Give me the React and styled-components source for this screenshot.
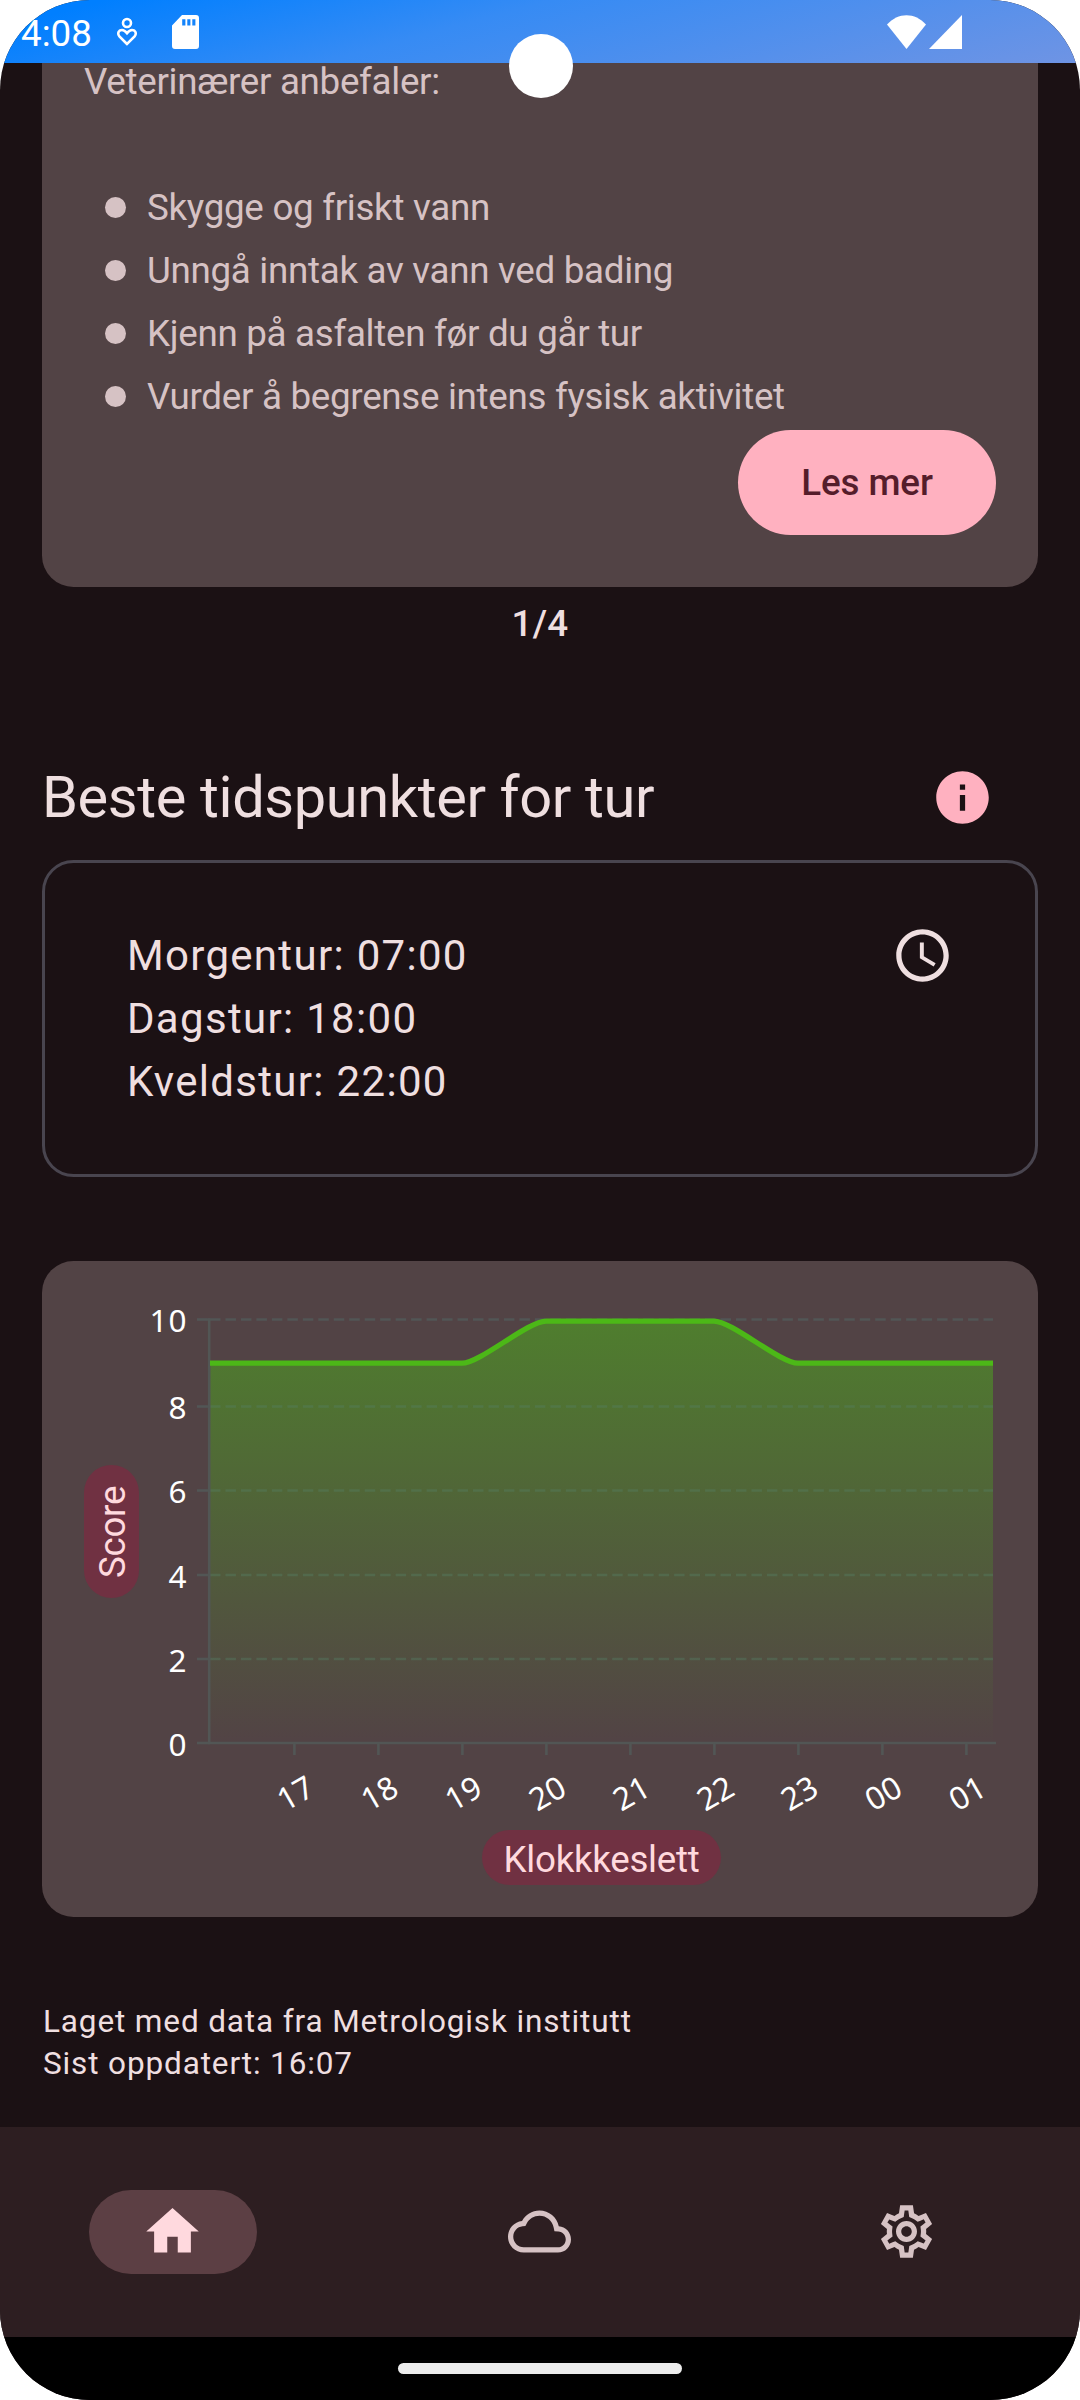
import React from "react";
import styled, { createGlobalStyle } from "styled-components";

const c = {
  bg: "#1b1114", surface: "#524345", onSurface: "#efdfe0", muted: "#d6c2c4",
  primary: "#ffb1c0", onPrimary: "#551d2b", pill: "#703142", onPill: "#ffd9de",
  nav: "#2d1e21", navActive: "#5c3f44", outline: "#49454f", line: "#4cb817", axis: "#525655",
};

const Global = createGlobalStyle`
  html, body { margin: 0; background: #fff; }
  *, *::before, *::after { box-sizing: border-box; }
  body { font-family: Roboto, "Noto Sans", sans-serif; -webkit-font-smoothing: antialiased; }
  h2, p, ul { margin: 0; padding: 0; }
`;

const Screen = styled.div`
  position: relative;
  display: flex;
  flex-direction: column;
  width: 1080px;
  height: 2400px;
  overflow: hidden;
  background: ${c.bg};
  border-radius: 90px;
`;

const StatusBar = styled.header`
  flex: none;
  display: flex;
  align-items: center;
  justify-content: space-between;
  height: 63px;
  padding: 0 118px 0 21px;
  color: #fff;
  background: linear-gradient(165deg, #007fff 8%, #368bf4 42%, #6f94e4 100%);
`;
const StatusGroup = styled.div`
  display: flex;
  align-items: center;
`;
const Time = styled.span`
  width: 71px;
  font-size: 36.75px;
  line-height: 63px;
  padding-top: 3px;
`;
const StatusIcon = styled.svg`
  display: block;
  flex: none;
  margin-left: ${(p) => p.$gap || 0}px;
  fill: currentColor;
`;
const Camera = styled.div`
  position: absolute;
  left: 508.5px;
  top: 33.5px;
  width: 64px;
  height: 64px;
  border-radius: 50%;
  background: #fff;
`;

const Content = styled.main`
  flex: 1;
  min-height: 0;
  display: flex;
  flex-direction: column;
  padding: 0 42px;
  color: ${c.onSurface};
`;

const AdviceCard = styled.section`
  flex: none;
  display: flex;
  flex-direction: column;
  height: 524px;
  padding: 0 42px;
  background: ${c.surface};
  border-radius: 0 0 31.5px 31.5px;
  color: ${c.muted};
  font-size: 36.75px;
  letter-spacing: -0.3px;
`;
const AdviceTitle = styled.p`
  height: 113px;
  line-height: 37px;
`;
const AdviceList = styled.ul`
  list-style: none;
  padding-left: 21px;
`;
const AdviceItem = styled.li`
  display: flex;
  align-items: center;
  gap: 21px;
  height: 63px;
  line-height: 63px;
  &::before {
    content: "";
    width: 21px;
    height: 21px;
    border-radius: 50%;
    background: currentColor;
  }
`;
const Button = styled.button`
  align-self: flex-end;
  margin-top: 2px;
  width: 258px;
  height: 105px;
  padding: 0;
  border: 0;
  border-radius: 53px;
  background: ${c.primary};
  color: ${c.onPrimary};
  font: 500 36.75px Roboto, sans-serif;
  letter-spacing: -0.1px;
`;
const Pager = styled.p`
  height: 73px;
  line-height: 73px;
  text-align: center;
  font-size: 36.75px;
  font-weight: 500;
  letter-spacing: 0.3px;
`;

const SectionHead = styled.div`
  display: flex;
  align-items: center;
  justify-content: space-between;
  height: 126px;
  margin-top: 74px;
  padding-right: 44px;
`;
const Title = styled.h2`
  font-size: 57.75px;
  font-weight: 400;
  line-height: 74px;
  letter-spacing: -0.38px;
`;
const Icon = styled.svg`
  display: block;
  flex: none;
  width: 63px;
  height: 63px;
  fill: ${(p) => p.$color};
`;

const TimesCard = styled.section`
  flex: none;
  display: flex;
  justify-content: space-between;
  height: 317px;
  padding: 61px 81px 58px 82px;
  border: 3px solid ${c.outline};
  border-radius: 31.5px;
`;
const TimeRow = styled.p`
  font-size: 42px;
  line-height: 63px;
  letter-spacing: 1.31px;
`;

const ChartCard = styled.section`
  flex: none;
  display: grid;
  grid-template-columns: 55px 1fr;
  grid-template-rows: 569px 55px;
  height: 656px;
  margin-top: 84px;
  padding-left: 42px;
  background: ${c.surface};
  border-radius: 31.5px;
`;
const AxisPill = styled.span`
  display: flex;
  align-items: center;
  justify-content: center;
  border-radius: 28px;
  background: ${c.pill};
  color: ${c.onPill};
  font-size: 36.75px;
  letter-spacing: -0.3px;
`;
const YPill = styled(AxisPill)`
  align-self: start;
  width: 55px;
  height: 133px;
  margin-top: 204px;
  padding-right: 2px;
  writing-mode: vertical-rl;
  transform: rotate(180deg);
`;
const XPill = styled(AxisPill)`
  grid-column: 2;
  width: 239px;
  height: 55px;
  margin-left: 343px;
  padding-top: 3px;
`;
const Plot = styled.svg`
  display: block;
  width: 899px;
  height: 569px;
`;
const Tick = styled.text`
  fill: #fff;
  font-family: "Noto Sans", sans-serif;
  font-size: 31.5px;
`;
const ScoreTick = styled(Tick)`
  letter-spacing: 1px;
`;

const Footer = styled.p`
  margin-top: 84px;
  padding-left: 1px;
  font-size: 31.5px;
  line-height: 42px;
  letter-spacing: 0.87px;
`;

const NavBar = styled.nav`
  flex: none;
  display: grid;
  grid-template-columns: 345px 1fr 347px;
  align-items: center;
  justify-items: center;
  height: 210px;
  background: ${c.nav};
`;
const NavItem = styled.div`
  display: flex;
  align-items: center;
  justify-content: center;
  width: 168px;
  height: 84px;
  padding-bottom: 1px;
  border-radius: 42px;
  background: ${(p) => (p.$active ? c.navActive : "transparent")};
`;
const GestureArea = styled.div`
  flex: none;
  display: flex;
  justify-content: center;
  height: 63px;
  padding-top: 26px;
  background: #000;
`;
const GestureBar = styled.div`
  width: 284px;
  height: 11px;
  border-radius: 6px;
  background: #ececec;
`;

const tips = [
  "Skygge og friskt vann",
  "Unngå inntak av vann ved bading",
  "Kjenn på asfalten før du går tur",
  "Vurder å begrense intens fysisk aktivitet",
];
const times = ["Morgentur: 07:00", "Dagstur: 18:00", "Kveldstur: 22:00"];
const hours = ["17", "18", "19", "20", "21", "22", "23", "00", "01"];
const levels = [[10, 1319.5], [8, 1406.5], [6, 1490.5], [4, 1575], [2, 1659], [0, 1743]];
const curve = "M210 1363.2H462C480 1363.2 528 1321 546 1321H714C732 1321 780 1363.2 798 1363.2H993";

function ScoreChart() {
  return (
    <Plot viewBox="139 1261 899 569">
      <defs>
        <linearGradient id="area" x1="0" x2="0" y1="1321" y2="1743" gradientUnits="userSpaceOnUse">
          <stop offset="0" stopColor={c.line} stopOpacity="0.5" />
          <stop offset="1" stopColor={c.line} stopOpacity="0" />
        </linearGradient>
      </defs>
      <path d={`${curve}V1743H210Z`} fill="url(#area)" />
      {levels.map(([v, y]) => (
        <g key={v}>
          <path d={`M197 ${y}H210`} stroke={c.axis} strokeWidth="2.6" />
          {v > 0 && (
            <path
              d={`M210 ${y}H993`}
              stroke={v === 10 ? c.axis : "#548064"}
              strokeOpacity={v === 10 ? 1 : 0.4}
              strokeWidth="2.6"
              strokeDasharray="10.5 4.97"
            />
          )}
          <ScoreTick x="187.500" y={y + 12.5} textAnchor="end">{v}</ScoreTick>
        </g>
      ))}
      <path d="M209.200 1318.500V1744.300M208 1743H996" stroke={c.axis} strokeWidth="2.6" fill="none" />
      <path d={curve} fill="none" stroke={c.line} strokeWidth="5.25" />
      {hours.map((h, i) => {
        const x = 294.4 + i * 84;
        return (
          <g key={h}>
            <path d={`M${x} 1743V1755`} stroke={c.axis} strokeWidth="2.6" />
            <Tick textAnchor="middle" transform={`translate(${x + 6.5} 1803) rotate(-30)`}>{h}</Tick>
          </g>
        );
      })}
    </Plot>
  );
}

export default function App() {
  return (
    <>
      <Global />
      <Screen>
        <StatusBar>
          <StatusGroup>
            <Time>4:08</Time>
            <StatusIcon $gap={24} width="22" height="30" viewBox="0 0 22 30">
              <circle cx="11" cy="6" r="4" fill="none" stroke="currentColor" strokeWidth="2.6" />
              <path d="M11 27 3.400 19.400C1.600 17.300 2 14.800 3.600 13.700 6 12.300 8.500 13 11 16.200 13.500 13 16 12.300 18.400 13.700 20 14.800 20.400 17.300 18.600 19.400Z" fill="none" stroke="currentColor" strokeWidth="2.6" />
            </StatusIcon>
            <StatusIcon $gap={34} width="27" height="34" viewBox="0 0 27 34">
              <path fillRule="evenodd" d="M10 0H24a3 3 0 0 1 3 3V31a3 3 0 0 1-3 3H3a3 3 0 0 1-3-3V10.500ZM10.200 4.200V10.500H13.400V4.200ZM15.300 4.200V10.500H18.400V4.200ZM20.300 4.200V10.500H23.400V4.200Z" />
            </StatusIcon>
          </StatusGroup>
          <StatusGroup>
            <StatusIcon width="39" height="34" viewBox="0 0 39 34">
              <path d="M0 9.500C11-3 28-3 39 9.500L19.500 34Z" />
            </StatusIcon>
            <StatusIcon $gap={3} width="33" height="34" viewBox="0 0 33 34">
              <path d="M33 0V34H0Z" />
            </StatusIcon>
          </StatusGroup>
        </StatusBar>

        <Content>
          <AdviceCard>
            <AdviceTitle>Veterinærer anbefaler:</AdviceTitle>
            <AdviceList>
              {tips.map((t) => <AdviceItem key={t}>{t}</AdviceItem>)}
            </AdviceList>
            <Button>Les mer</Button>
          </AdviceCard>
          <Pager>1/4</Pager>

          <SectionHead>
            <Title>Beste tidspunkter for tur</Title>
            <Icon $color={c.primary} viewBox="0 0 24 24">
              <path d="M12 2C6.480 2 2 6.480 2 12s4.480 10 10 10 10-4.480 10-10S17.520 2 12 2zm1 15h-2v-6h2v6zm0-8h-2V7h2v2z" />
            </Icon>
          </SectionHead>
          <TimesCard>
            <div>
              {times.map((t) => <TimeRow key={t}>{t}</TimeRow>)}
            </div>
            <Icon $color={c.onSurface} viewBox="0 0 24 24">
              <path d="M11.990 2C6.470 2 2 6.480 2 12s4.470 10 9.990 10C17.520 22 22 17.520 22 12S17.520 2 11.990 2zM12 20c-4.420 0-8-3.580-8-8s3.580-8 8-8 8 3.580 8 8-3.580 8-8 8zm.5-13H11v6l5.250 3.150.75-1.230-4.500-2.670z" />
            </Icon>
          </TimesCard>

          <ChartCard>
            <YPill>Score</YPill>
            <ScoreChart />
            <XPill>Klokkkeslett</XPill>
          </ChartCard>

          <Footer>
            Laget med data fra Metrologisk institutt<br />
            Sist oppdatert: 16:07
          </Footer>
        </Content>

        <NavBar>
          <NavItem $active>
            <Icon $color={c.onPill} viewBox="0 0 24 24"><path d="M10 20v-6h4v6h5v-8h3L12 3 2 12h3v8z" /></Icon>
          </NavItem>
          <NavItem>
            <Icon $color={c.muted} viewBox="0 0 24 24">
              <path d="M19.350 10.040C18.670 6.590 15.640 4 12 4 9.110 4 6.600 5.640 5.350 8.040 2.340 8.360 0 10.910 0 14c0 3.310 2.690 6 6 6h13c2.760 0 5-2.240 5-5 0-2.640-2.050-4.780-4.650-4.960zM19 18H6c-2.210 0-4-1.790-4-4 0-2.050 1.530-3.760 3.560-3.970l1.070-.11.5-.95C8.080 7.140 9.940 6 12 6c2.620 0 4.880 1.860 5.390 4.430l.3 1.500 1.530.11c1.560.1 2.780 1.410 2.780 2.960 0 1.650-1.350 3-3 3z" />
            </Icon>
          </NavItem>
          <NavItem>
            <Icon $color={c.muted} viewBox="0 0 24 24">
              <path fillRule="evenodd" d="M19.440 12.990c.04-.32.08-.64.08-.99s-.03-.66-.07-.99l2.300-1.900-2.330-4.150-2.830 1.110c-.52-.4-1.090-.74-1.710-1L14.440 2H9.570l-.44 3.070c-.62.26-1.190.6-1.710 1L4.590 4.960 2.260 9.110l2.300 1.900c-.04.33-.07.65-.07.99s.03.67.08.99l-2.310 1.900 2.330 4.150 2.830-1.110c.53.41 1.100.75 1.710 1.010L9.570 22h4.870l.43-3.060c.62-.26 1.200-.6 1.720-1.010l2.830 1.110 2.330-4.150zM17.450 11.270c.04.31.05.52.05.73 0 .21-.02.43-.05.73l-.14 1.130.89.7 1.080.84-.7 1.210-1.270-.51-1.040-.42-.9.68c-.43.32-.84.56-1.250.73l-1.060.43-.16 1.130-.2 1.350h-1.400l-.19-1.350-.16-1.130-1.060-.43c-.43-.18-.83-.41-1.230-.71l-.91-.7-1.060.43-1.270.51-.7-1.210 1.080-.84.89-.7-.14-1.130c-.03-.31-.05-.54-.05-.74s.02-.43.05-.73l.14-1.130-.89-.7-1.080-.84.7-1.210 1.270.51 1.040.42.9-.68c.43-.32.84-.56 1.250-.73l1.060-.43.16-1.130.2-1.350h1.390l.19 1.350.16 1.130 1.060.43c.43.18.83.41 1.230.71l.91.7 1.060-.43 1.270-.51.7 1.210-1.070.85-.89.7.14 1.130zM12 8c-2.210 0-4 1.790-4 4s1.790 4 4 4 4-1.790 4-4-1.790-4-4-4zm0 6c-1.100 0-2-.9-2-2s.9-2 2-2 2 .9 2 2-.9 2-2 2z" />
            </Icon>
          </NavItem>
        </NavBar>
        <GestureArea><GestureBar /></GestureArea>
        <Camera />
      </Screen>
    </>
  );
}
